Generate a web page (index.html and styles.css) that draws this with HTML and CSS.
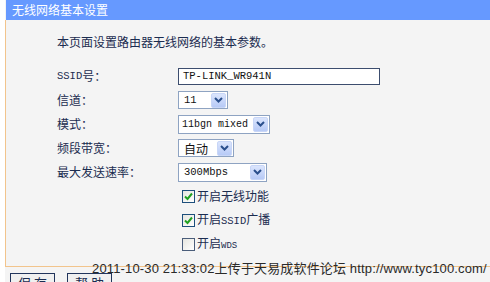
FILE: index.html
```html
<!DOCTYPE html>
<html>
<head>
<meta charset="utf-8">
<link rel="stylesheet" href="styles.css">
</head>
<body>
<div class="frame">
  <div class="header">无线网络基本设置</div>
  <div class="panel">
    <p class="intro">本页面设置路由器无线网络的基本参数。</p>
    <div class="form">
      <div class="label"><span class="mono">SSID</span>号：</div>
      <div class="field"><div class="textbox mono">TP-LINK_WR941N</div></div>

      <div class="label">信道：</div>
      <div class="field"><div class="select w-ch"><span class="mono">11</span><span class="arrow"><svg width="9" height="6" viewBox="0 0 9 6"><path d="M1 1 L4.5 4.5 L8 1" fill="none" stroke="#2a4f8c" stroke-width="2"/></svg></span></div></div>

      <div class="label">模式：</div>
      <div class="field"><div class="select w-mode"><span class="mono">11bgn mixed</span><span class="arrow"><svg width="9" height="6" viewBox="0 0 9 6"><path d="M1 1 L4.5 4.5 L8 1" fill="none" stroke="#2a4f8c" stroke-width="2"/></svg></span></div></div>

      <div class="label">频段带宽：</div>
      <div class="field"><div class="select w-bw"><span class="cjk">自动</span><span class="arrow"><svg width="9" height="6" viewBox="0 0 9 6"><path d="M1 1 L4.5 4.5 L8 1" fill="none" stroke="#2a4f8c" stroke-width="2"/></svg></span></div></div>

      <div class="label">最大发送速率：</div>
      <div class="field"><div class="select w-rate"><span class="mono">300Mbps</span><span class="arrow"><svg width="9" height="6" viewBox="0 0 9 6"><path d="M1 1 L4.5 4.5 L8 1" fill="none" stroke="#2a4f8c" stroke-width="2"/></svg></span></div></div>

      <div class="label"></div>
      <div class="field"><span class="check on"><svg width="11" height="11" viewBox="0 0 11 11"><path d="M2 5.5 L4.5 8 L9 2.5" fill="none" stroke="#21a121" stroke-width="2"/></svg></span><span class="ctext">开启无线功能</span></div>

      <div class="label"></div>
      <div class="field"><span class="check on"><svg width="11" height="11" viewBox="0 0 11 11"><path d="M2 5.5 L4.5 8 L9 2.5" fill="none" stroke="#21a121" stroke-width="2"/></svg></span><span class="ctext">开启<span class="mono">SSID</span>广播</span></div>

      <div class="label"></div>
      <div class="field"><span class="check off"></span><span class="ctext">开启<span class="mono sm">WDS</span></span></div>
    </div>
  </div>
  <div class="footer">
    <span class="btn">保 存</span>
    <span class="btn">帮 助</span>
  </div>
  <div class="watermark">2011-10-30 21:33:02上传于天易成软件论坛 http://www.tyc100.com/</div>
</div>
</body>
</html>
```
FILE: styles.css
```css
html, body {
  margin: 0;
  padding: 0;
  background: #ffffff;
  overflow: hidden;
}
body {
  width: 490px;
  height: 282px;
  font-family: "Noto Sans CJK SC", "Liberation Sans", sans-serif;
  font-size: 12px;
  color: #1b2c50;
}
.frame {
  position: relative;
  margin-left: 5px;
  height: 282px;
  background: #f4f4f4;
}
.header {
  height: 20px;
  line-height: 19px;
  background: #6699ff;
  color: #ffffff;
  padding-left: 6px;
  margin-left: 1px;
  font-size: 12px;
}
.panel {
  border-left: 1px solid #f2c48c;
  padding: 14px 0 0 51px;
  height: 232px;
}
.intro {
  margin: 0;
  line-height: 16px;
  height: 16px;
}
.form {
  display: grid;
  grid-template-columns: 121px 1fr;
  grid-auto-rows: 24px;
  margin-top: 14px;
}
.label {
  display: flex;
  align-items: center;
  line-height: 16px;
}
.field {
  display: flex;
  align-items: center;
  white-space: nowrap;
}
.mono {
  font-family: "Liberation Mono", "DejaVu Sans Mono", monospace;
  font-size: 10.5px;
  white-space: nowrap;
}
.mono.sm {
  font-size: 9px;
}
.cjk {
  font-size: 12px;
}
.textbox {
  box-sizing: border-box;
  width: 202px;
  height: 17px;
  border: 1px solid #3c4d6e;
  background: #ffffff;
  color: #111111;
  padding-left: 4px;
  line-height: 15px;
}
.select {
  box-sizing: border-box;
  height: 19px;
  border: 1px solid #8ea3c2;
  background: #ffffff;
  color: #111111;
  display: flex;
  align-items: center;
  justify-content: space-between;
  padding: 0 1px 0 5px;
}
.w-ch { width: 50px; height: 18px; }
.w-mode { width: 92px; padding-left: 3px; }
.w-mode .mono { font-size: 10px; }
.w-bw { width: 56px; height: 18px; }
.w-rate { width: 89px; }
.arrow {
  width: 15px;
  height: 15px;
  flex: none;
  box-sizing: border-box;
  background: linear-gradient(#dbe5fd, #b7caf6);
  border: 1px solid #c8d6f7;
  border-radius: 2px;
  display: flex;
  align-items: center;
  justify-content: center;
}
.check {
  box-sizing: border-box;
  width: 13px;
  height: 13px;
  margin-left: 4px;
  border: 1px solid #1d4f7c;
  background: linear-gradient(135deg, #e6e6e0, #ffffff);
  display: flex;
  align-items: center;
  justify-content: center;
}
.check.off {
  border-color: #4a5d7a;
}
.ctext {
  margin-left: 2px;
  line-height: 16px;
}
.footer {
  border-top: 1px solid #f2c48c;
  margin-top: 0;
  padding: 6px 0 0 5px;
  display: flex;
  gap: 12px;
}
.btn {
  box-sizing: border-box;
  width: 45px;
  height: 20px;
  border: 1px solid #22355c;
  background: #f0f0f0;
  text-align: center;
  line-height: 18px;
  font-size: 13px;
  color: #1b2c50;
}
.watermark {
  position: absolute;
  left: 87px;
  top: 261px;
  font-family: "Liberation Sans", "Noto Sans CJK SC", sans-serif;
  font-size: 13px;
  line-height: 16px;
  color: #2a2a2a;
  white-space: nowrap;
  letter-spacing: 0.15px;
}
```
